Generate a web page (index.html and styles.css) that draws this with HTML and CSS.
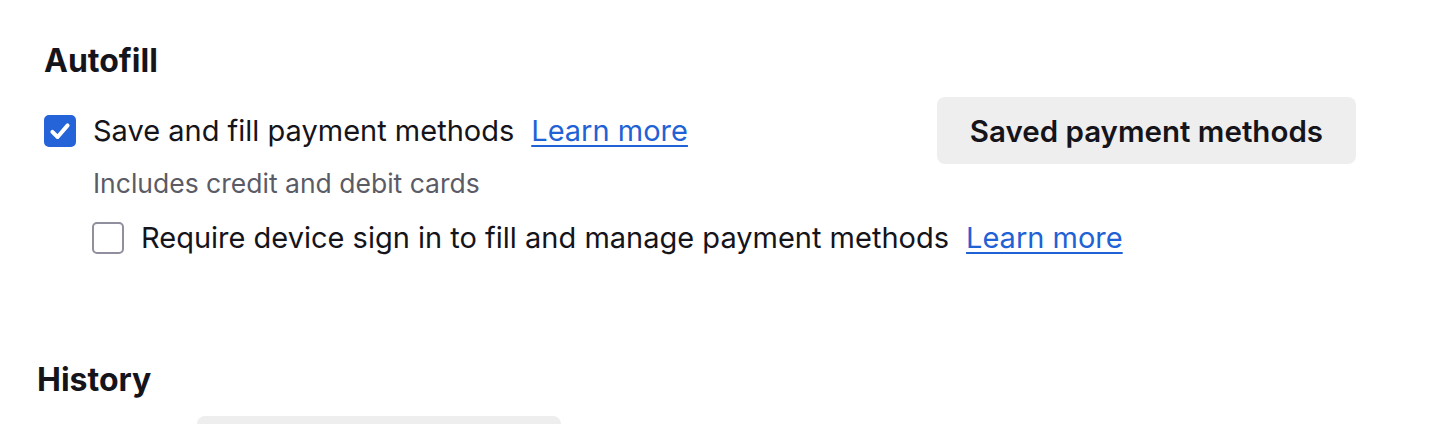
FILE: index.html
```html
<!DOCTYPE html>
<html lang="en">
<head>
  <meta charset="UTF-8">
  <title>Settings</title>
  <link rel="stylesheet" href="styles.css">
</head>
<body>
  <section class="group autofill">
    <h2>Autofill</h2>
    <div class="row">
      <label class="check">
        <span class="box on">
          <svg viewBox="0 0 16 16" width="32" height="32"><path d="M4.2 8.4l2.6 2.6 5-5.8" fill="none" stroke="#fff" stroke-width="2" stroke-linecap="round" stroke-linejoin="round"/></svg>
        </span>
        <span class="text">Save and fill payment methods</span>
        <a href="javascript:;" class="learn">Learn more</a>
      </label>
      <button class="btn">Saved payment methods</button>
    </div>
    <p class="desc">Includes credit and debit cards</p>
    <label class="check sub">
      <span class="box"></span>
      <span class="text">Require device sign in to fill and manage payment methods</span>
      <a href="javascript:;" class="learn">Learn more</a>
    </label>
  </section>
  <section class="group history">
    <h2>History</h2>
    <div class="history-row">
      <div class="select"></div>
    </div>
  </section>
</body>
</html>
```

FILE: styles.css
```css
* {margin: 0; padding: 0; box-sizing: border-box;}
html, body {
  height: 100%;
  overflow: hidden;
}
body {
  background: #fff;
  color: #15141a;
  font-family: Inter, "Noto Sans", sans-serif;
  font-size: 29px;
}
h2 {
  font-size: 32px;
  font-weight: 700;
  line-height: 40px;
}
.autofill {
  padding: 41px 0 0 44px;
  width: 1356px;
}
.row {
  display: flex;
  align-items: center;
  justify-content: space-between;
  margin-top: 16px;
}
.check {
  display: flex;
  align-items: center;
  line-height: 32px;
}
.box {
  width: 32px;
  height: 32px;
  border: 2px solid #8f8f9d;
  border-radius: 5px;
  margin-right: 17px;
  flex: none;
}
.box.on {
  background: #2563d8;
  border-color: #2563d8;
}
.box svg {
  display: block;
  margin: -2px;
}
.learn {
  color: #1f62d6;
  margin-left: 17px;
  text-decoration: underline;
  text-underline-offset: 4px;
  text-decoration-thickness: 2px;
}
.btn {
  background: #eeeeee;
  border: none;
  border-radius: 8px;
  height: 67px;
  padding: 0 33px;
  font-family: inherit;
  font-size: 29.5px;
  font-weight: 600;
  color: #15141a;
}
.desc {
  margin: 3px 0 0 49px;
  color: #5b5b66;
  font-size: 26.5px;
  line-height: 32px;
}
.sub {
  margin: 23px 0 0 48px;
}
.history {
  padding: 106px 0 0 37px;
}
.history-row {
  margin-top: 16px;
  padding-left: 160px;
}
.select {
  width: 364px;
  height: 67px;
  background: #eeeeee;
  border-radius: 8px;
}
```
